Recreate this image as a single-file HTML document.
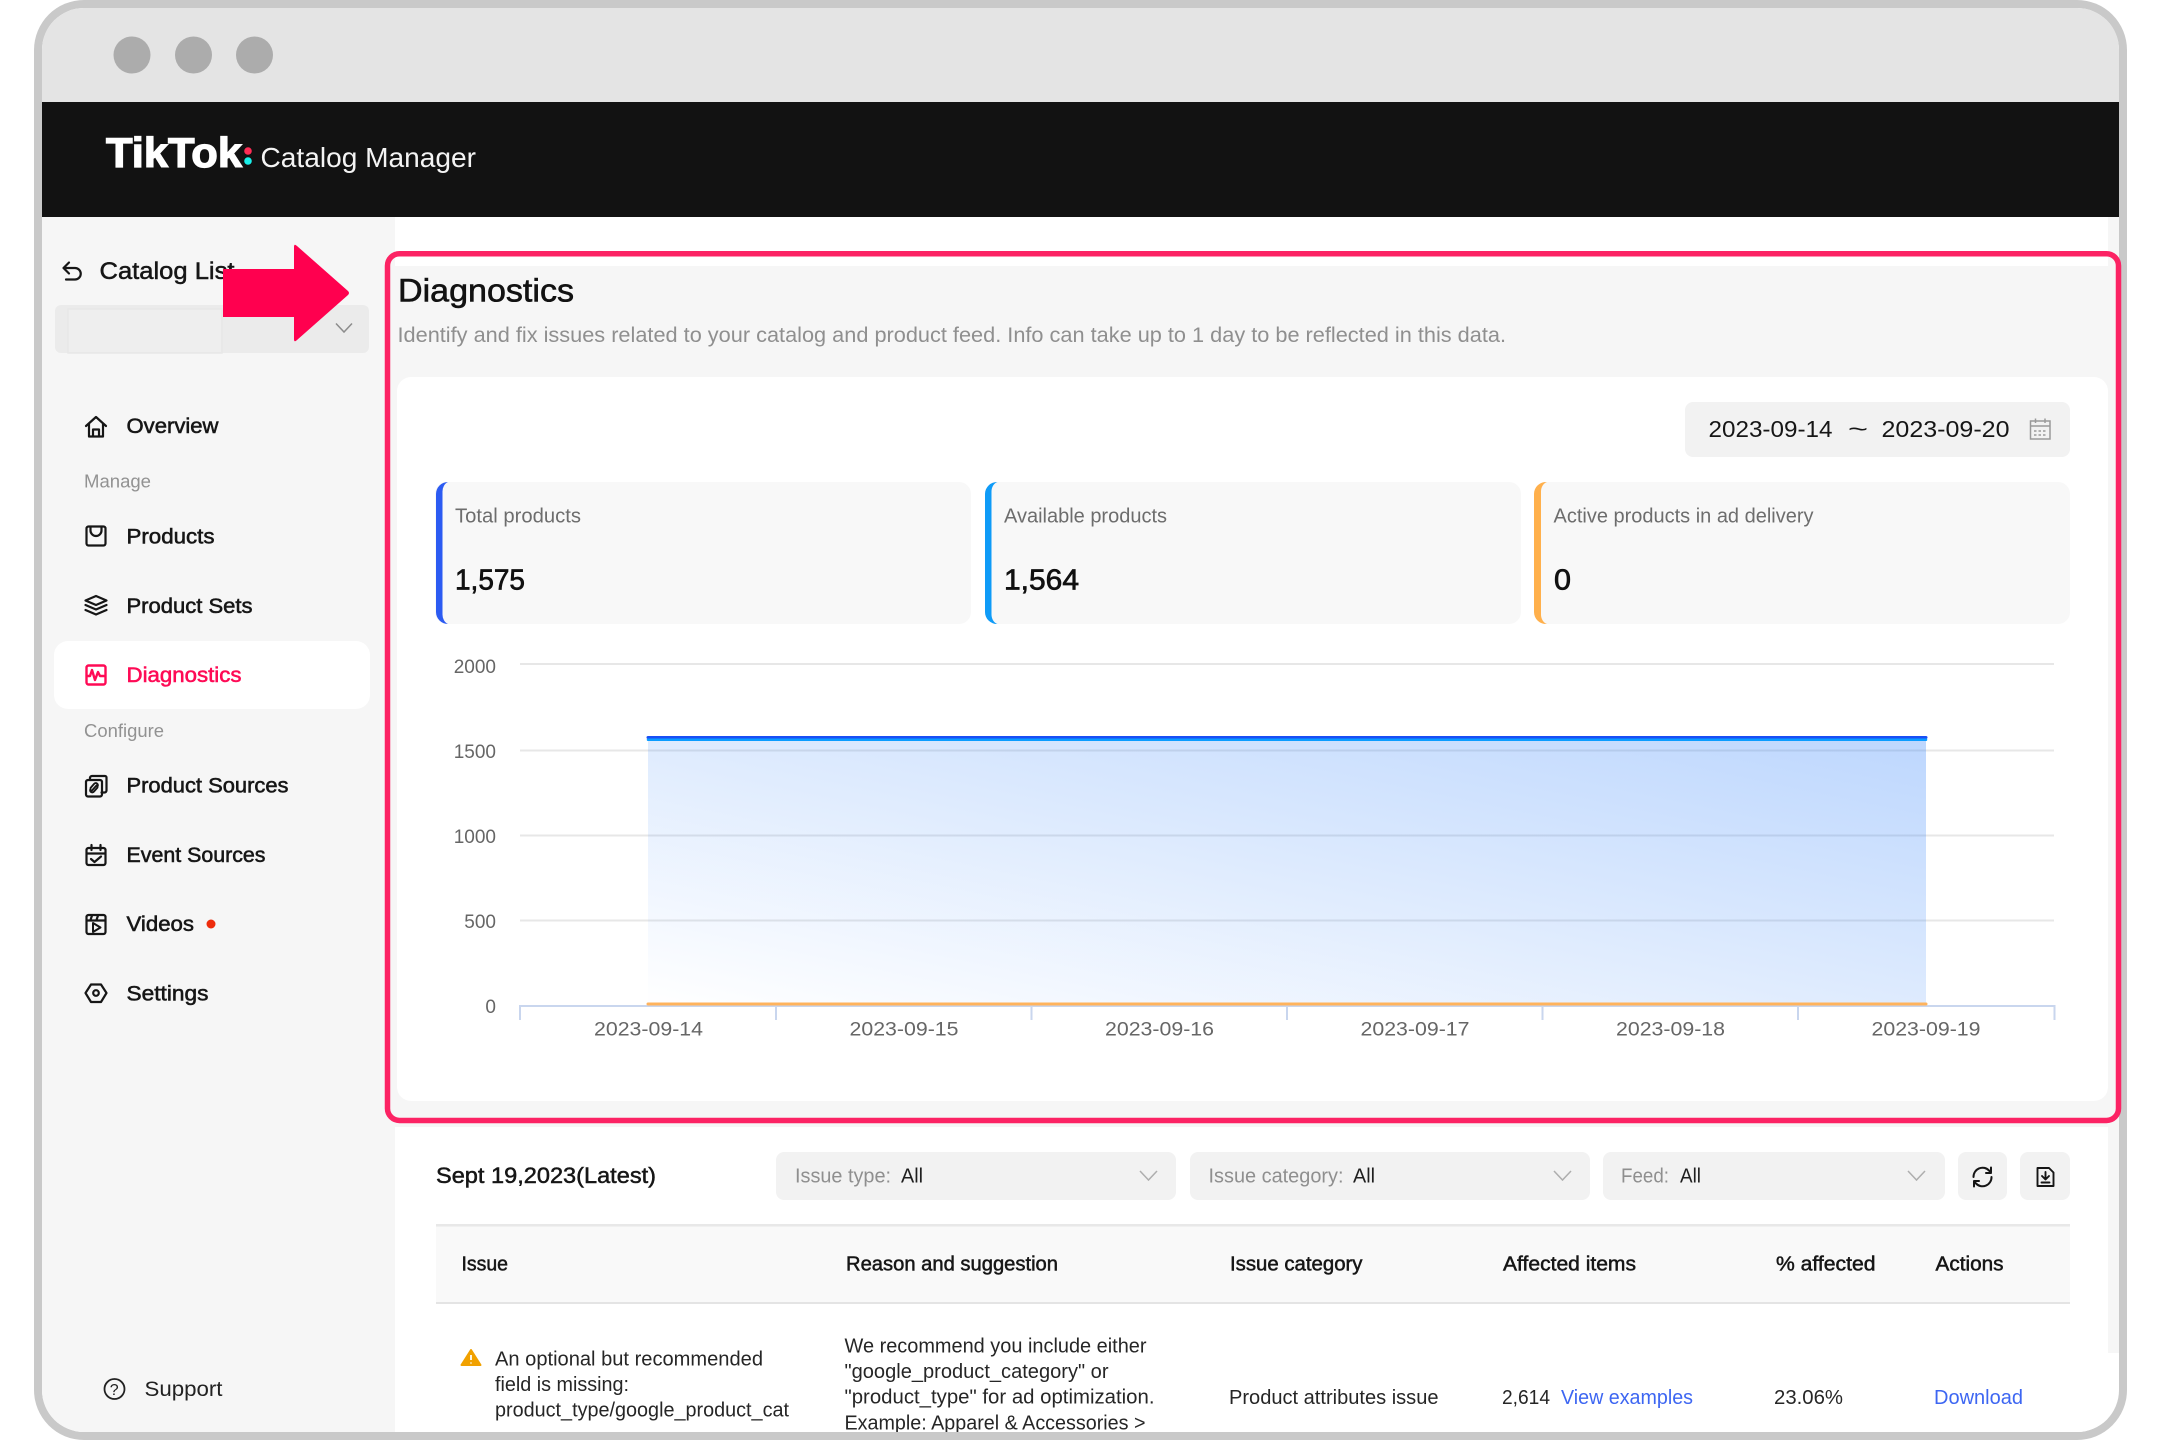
<!DOCTYPE html>
<html lang="en">
<head>
<meta charset="utf-8">
<title>TikTok Catalog Manager - Diagnostics</title>
<style>
html,body{margin:0;padding:0;background:#fff;width:2160px;height:1440px;overflow:hidden}
svg{display:block}
text{font-family:"Liberation Sans",Arial,sans-serif;fill:#161616;white-space:pre}
.m{stroke:#161616;stroke-width:.5px}
.nav{font-size:21px;stroke:#161616;stroke-width:.55px}
.lbl{font-size:20px;fill:#8f8f8f}
.val{font-size:20px;fill:#1f1f1f}
.body{font-size:20px;fill:#262626}
.th{font-size:20px;stroke:#161616;stroke-width:.5px}
.stat{font-size:20px;fill:#6d6d6d}
.num{font-size:29px;fill:#111;stroke:#111;stroke-width:.7px}
.ax{font-size:19px;fill:#666}
.lnk{font-size:20px;fill:#3d66f2}
.ic{fill:none;stroke:#161616;stroke-width:2.2;stroke-linecap:round;stroke-linejoin:round}
.ip{fill:none;stroke:#ff0a55;stroke-width:2.4;stroke-linecap:round;stroke-linejoin:round}
</style>
</head>
<body>
<svg width="2160" height="1440" viewBox="0 0 2160 1440" xmlns="http://www.w3.org/2000/svg">
<defs>
<clipPath id="inner"><rect x="42" y="8" width="2077" height="1424" rx="42" ry="42"/></clipPath>
<linearGradient id="area" gradientUnits="userSpaceOnUse" x1="648" y1="1006" x2="755" y2="493">
<stop offset="0" stop-color="#2a7dfb" stop-opacity="0"/>
<stop offset="1" stop-color="#2a7dfb" stop-opacity=".31"/>
</linearGradient>
</defs>

<!-- frame -->
<rect x="34" y="0" width="2093" height="1440" rx="50" ry="50" fill="#c9c9c9"/>
<g clip-path="url(#inner)">
<rect x="42" y="8" width="2077" height="1424" fill="#fff"/>
<!-- title bar -->
<rect x="42" y="8" width="2077" height="94" fill="#e4e4e4"/>
<circle cx="132" cy="55" r="18.5" fill="#acacac"/>
<circle cx="193.500" cy="55" r="18.5" fill="#acacac"/>
<circle cx="254.500" cy="55" r="18.5" fill="#acacac"/>
<!-- black header -->
<rect x="42" y="102" width="2077" height="115" fill="#121212"/>
<text x="106" y="167" font-size="42" font-weight="700" textLength="136" lengthAdjust="spacingAndGlyphs" style="fill:#fff;stroke:#fff;stroke-width:1.300px">TikTok</text>
<circle cx="248" cy="151" r="3.800" fill="#fe2c55"/>
<circle cx="248" cy="161" r="3.800" fill="#19f0ea"/>
<text x="260.500" y="167" font-size="28" textLength="215.500" lengthAdjust="spacingAndGlyphs" style="fill:#f4f4f4">Catalog Manager</text>

<!-- sidebar -->
<rect x="42" y="217" width="353" height="1215" fill="#f6f6f6"/>
<!-- main grey bg -->
<rect x="395" y="266" width="1724" height="861" fill="#f6f6f6"/>
<rect x="2108" y="217" width="11" height="1136" fill="#f6f6f6"/>
<!-- cards -->
<rect x="397" y="377" width="1711" height="724" rx="14" fill="#fff"/>
<rect x="397" y="1127" width="1711" height="330" rx="14" fill="#fff"/>

<!-- sidebar contents -->
<path class="ic" d="M69 262.500 L63.500 268 L69 273.500 M63.500 268 H75 a5.500 5.500 0 0 1 0 11.500 H66"/>
<text x="99.500" y="279" font-size="24.500" textLength="135" lengthAdjust="spacingAndGlyphs" class="m">Catalog List</text>
<rect x="55" y="305" width="314" height="48" rx="6" fill="#ebebeb"/>
<rect x="68" y="309" width="154" height="44" fill="#eeeeee" stroke="#e7e7e7" stroke-width="1.500"/>
<path d="M336 323.500 L344 332 L352 323.500" fill="none" stroke="#8c8c8c" stroke-width="1.500"/>

<path class="ic" d="M86 426 L96 417 L106 426 M89 424 V436.500 H103 V424 M93 436.500 V429.500 H99 V436.500"/>
<text x="126.500" y="433" textLength="92" lengthAdjust="spacingAndGlyphs" class="nav">Overview</text>
<text x="84" y="487.500" font-size="18.500" textLength="67" lengthAdjust="spacingAndGlyphs" style="fill:#929292">Manage</text>

<rect x="86.500" y="526.500" width="19" height="19" rx="2" class="ic"/>
<path class="ic" d="M90.500 527 v3.500 a5.500 5.500 0 0 0 11 0 v-3.500"/>
<text x="126.500" y="543.500" textLength="88" lengthAdjust="spacingAndGlyphs" class="nav">Products</text>

<path class="ic" d="M96 596 L106.500 600.500 L96 605 L85.500 600.500 Z M85.500 605 L96 609.500 L106.500 605 M85.500 610 L96 614.500 L106.500 610"/>
<text x="126.500" y="613" textLength="126" lengthAdjust="spacingAndGlyphs" class="nav">Product Sets</text>

<rect x="54" y="641" width="316" height="68" rx="14" fill="#fff"/>
<rect x="86.500" y="665.500" width="19" height="19" rx="2" class="ip"/>
<path class="ip" d="M87 676 h3 l2 -6 l3 10 l3 -8 l2 4 h5"/>
<text x="126.500" y="682" textLength="115" lengthAdjust="spacingAndGlyphs" font-size="21" style="fill:#fe0a55;stroke:#fe0a55;stroke-width:.55px">Diagnostics</text>
<text x="84" y="737" font-size="18.500" textLength="80" lengthAdjust="spacingAndGlyphs" style="fill:#929292">Configure</text>

<rect x="86" y="780" width="16" height="16.500" rx="2" class="ic"/>
<path class="ic" d="M90 780 v-2 a2 2 0 0 1 2 -2 h13 a1.500 1.500 0 0 1 1.500 1.500 v13 a2 2 0 0 1 -2 2 h-3"/>
<path class="ic" style="stroke-width:1.900" d="M91.500 791 L96.500 785.500 M90.500 788 l3.500 -4 a2 2 0 0 1 3.500 2.500 M97.500 787.500 l-3.500 4 a2 2 0 0 1 -3.500 -2.500"/>
<text x="126.500" y="792.500" textLength="162" lengthAdjust="spacingAndGlyphs" class="nav">Product Sources</text>

<rect x="86.500" y="848" width="19" height="17" rx="2" class="ic"/>
<path class="ic" d="M87 853.500 H105 M91.500 845 V850 M100.500 845 V850 M91 859 l3.500 3 l6.500 -5.500"/>
<text x="126.500" y="862" textLength="139" lengthAdjust="spacingAndGlyphs" class="nav">Event Sources</text>

<rect x="86.500" y="915" width="19" height="19" rx="2" class="ic"/>
<path class="ic" d="M87 920.500 H105 M92 915.500 l-1.500 4.500 M98 915.500 l-1.500 4.500"/>
<path d="M93 923 L100.500 927.500 L93 932 Z" fill="none" stroke="#161616" stroke-width="2" stroke-linejoin="round"/>
<text x="126.500" y="931" textLength="67.500" lengthAdjust="spacingAndGlyphs" class="nav">Videos</text>
<circle cx="211" cy="924" r="4.500" fill="#ee2c0c"/>

<path class="ic" d="M85.500 993 L91 984.500 H101 L106.500 993 L101 1002 H91 Z"/>
<circle cx="96" cy="993" r="2.800" class="ic"/>
<text x="126.500" y="1000.500" textLength="82" lengthAdjust="spacingAndGlyphs" class="nav">Settings</text>

<circle cx="114.500" cy="1389" r="10" fill="none" stroke="#222" stroke-width="1.800"/>
<text x="109.800" y="1395" font-size="16" style="fill:#222">?</text>
<text x="144.500" y="1396" font-size="21" textLength="78" lengthAdjust="spacingAndGlyphs" style="fill:#222">Support</text>

<!-- heading -->
<text x="398" y="301.500" font-size="32" textLength="176" lengthAdjust="spacingAndGlyphs" style="fill:#121212;stroke:#121212;stroke-width:.6px">Diagnostics</text>
<text x="397.500" y="342" font-size="21" textLength="1108.500" lengthAdjust="spacingAndGlyphs" style="fill:#8f8f8f">Identify and fix issues related to your catalog and product feed. Info can take up to 1 day to be reflected in this data.</text>

<!-- date picker -->
<rect x="1685" y="402" width="385" height="55" rx="8" fill="#f2f2f2"/>
<text x="1708.500" y="437" font-size="23" textLength="124" lengthAdjust="spacingAndGlyphs">2023-09-14</text>
<text x="1848" y="437" font-size="23" textLength="20" lengthAdjust="spacingAndGlyphs">~</text>
<text x="1881.500" y="437" font-size="23" textLength="128" lengthAdjust="spacingAndGlyphs">2023-09-20</text>
<g fill="none" stroke="#9a9a9a" stroke-width="1.500">
<rect x="2030.500" y="421" width="19.500" height="18"/>
<path d="M2031 426 H2050 M2035.500 418.500 V423 M2045 418.500 V423"/>
<path stroke-dasharray="2.500 2" d="M2034 431 H2047 M2034 435 H2047"/>
</g>

<!-- stat cards -->
<g>
<rect x="435" y="482" width="536" height="142" rx="12" fill="#f8f8f8"/>
<rect x="985" y="482" width="536" height="142" rx="12" fill="#f8f8f8"/>
<rect x="1535" y="482" width="535" height="142" rx="12" fill="#f8f8f8"/>
<path d="M448 482 A12 12 0 0 0 436 494 V612 A12 12 0 0 0 448 624 A8 10 0 0 1 442.500 614 V492 A8 10 0 0 1 448 482 Z" fill="#2c5bf2"/>
<path d="M997.500 482 A12 12 0 0 0 985 494 V612 A12 12 0 0 0 997.500 624 A8 10 0 0 1 991.500 614 V492 A8 10 0 0 1 997.500 482 Z" fill="#0f9bf7"/>
<path d="M1547 482 A12 12 0 0 0 1534 494 V612 A12 12 0 0 0 1547 624 A8 10 0 0 1 1541 614 V492 A8 10 0 0 1 1547 482 Z" fill="#ffb04c"/>
<text x="455" y="522.500" textLength="126" lengthAdjust="spacingAndGlyphs" class="stat">Total products</text>
<text x="1004" y="522.500" textLength="163" lengthAdjust="spacingAndGlyphs" class="stat">Available products</text>
<text x="1553.500" y="522.500" textLength="260" lengthAdjust="spacingAndGlyphs" class="stat">Active products in ad delivery</text>
<text x="455" y="589.500" textLength="70" lengthAdjust="spacingAndGlyphs" class="num">1,575</text>
<text x="1004" y="589.500" textLength="75" lengthAdjust="spacingAndGlyphs" class="num">1,564</text>
<text x="1554" y="589.500" textLength="17" lengthAdjust="spacingAndGlyphs" class="num">0</text>
</g>

<!-- chart -->
<g stroke="#e7e7e7" stroke-width="2">
<path d="M520 664 H2054 M520 750.500 H2054 M520 835.500 H2054 M520 920.500 H2054"/>
</g>
<rect x="648" y="738" width="1278" height="268" fill="url(#area)"/>
<g stroke="#c9d6ee" stroke-width="2" fill="none">
<path d="M520 1020 V1006 H2054.500 V1020 M776 1006 V1020 M1031.500 1006 V1020 M1287 1006 V1020 M1542.500 1006 V1020 M1798 1006 V1020"/>
</g>
<path d="M648 737.500 H1926" stroke="#1a4ff5" stroke-width="3" stroke-linecap="round"/>
<path d="M648 739.800 H1926" stroke="#0a9cff" stroke-width="2.500" stroke-linecap="round"/>
<path d="M648 1004 H1926" stroke="#ffb35c" stroke-width="3" stroke-linecap="round"/>
<text x="496" y="673" text-anchor="end" class="ax">2000</text>
<text x="496" y="758" text-anchor="end" class="ax">1500</text>
<text x="496" y="843" text-anchor="end" class="ax">1000</text>
<text x="496" y="928" text-anchor="end" class="ax">500</text>
<text x="496" y="1013" text-anchor="end" class="ax">0</text>
<text x="594" y="1035.500" textLength="109" lengthAdjust="spacingAndGlyphs" class="ax">2023-09-14</text>
<text x="849.500" y="1035.500" textLength="109" lengthAdjust="spacingAndGlyphs" class="ax">2023-09-15</text>
<text x="1105" y="1035.500" textLength="109" lengthAdjust="spacingAndGlyphs" class="ax">2023-09-16</text>
<text x="1360.500" y="1035.500" textLength="109" lengthAdjust="spacingAndGlyphs" class="ax">2023-09-17</text>
<text x="1616" y="1035.500" textLength="109" lengthAdjust="spacingAndGlyphs" class="ax">2023-09-18</text>
<text x="1871.500" y="1035.500" textLength="109" lengthAdjust="spacingAndGlyphs" class="ax">2023-09-19</text>

<!-- filters -->
<text x="436" y="1183" font-size="22" textLength="220" lengthAdjust="spacingAndGlyphs" class="m">Sept 19,2023(Latest)</text>
<rect x="776" y="1152" width="400" height="48" rx="8" fill="#f2f2f2"/>
<rect x="1190" y="1152" width="400" height="48" rx="8" fill="#f2f2f2"/>
<rect x="1603" y="1152" width="342" height="48" rx="8" fill="#f2f2f2"/>
<rect x="1958" y="1152" width="49" height="48" rx="8" fill="#f2f2f2"/>
<rect x="2020" y="1152" width="50" height="48" rx="8" fill="#f2f2f2"/>
<text x="795" y="1182.500" textLength="96" lengthAdjust="spacingAndGlyphs" class="lbl">Issue type:</text>
<text x="901" y="1182.500" textLength="22" lengthAdjust="spacingAndGlyphs" class="val">All</text>
<text x="1208.500" y="1182.500" textLength="135" lengthAdjust="spacingAndGlyphs" class="lbl">Issue category:</text>
<text x="1353" y="1182.500" textLength="22" lengthAdjust="spacingAndGlyphs" class="val">All</text>
<text x="1621" y="1182.500" textLength="48" lengthAdjust="spacingAndGlyphs" class="lbl">Feed:</text>
<text x="1680" y="1182.500" textLength="21" lengthAdjust="spacingAndGlyphs" class="val">All</text>
<g fill="none" stroke="#aeaeae" stroke-width="1.500">
<path d="M1140 1171 L1148.500 1180 L1157 1171"/>
<path d="M1554 1171 L1562.500 1180 L1571 1171"/>
<path d="M1908 1171 L1916.500 1180 L1925 1171"/>
</g>
<path class="ic" style="stroke-width:2" d="M1973.500 1177 a9 9 0 0 1 15.500 -6.500 l2 2 M1991.500 1177 a9 9 0 0 1 -15.500 6.500 l-2 -2 M1991 1167.500 v5.500 h-5 M1974 1186.500 v-5.500 h5"/>
<path class="ic" style="stroke-width:1.900" d="M2037.500 1168 H2049 L2053.500 1172.500 V1186 H2037.500 Z M2045.500 1172 V1179 M2042 1176 L2045.500 1179.500 L2049 1176 M2041.500 1182.500 H2049.500"/>

<!-- table -->
<rect x="436" y="1224" width="1634" height="79" fill="#f9f9f9"/>
<rect x="436" y="1224" width="1634" height="2.500" fill="#e8e8e8"/>
<rect x="436" y="1302" width="1634" height="2" fill="#e4e4e4"/>
<text x="461.500" y="1270.500" textLength="46.500" lengthAdjust="spacingAndGlyphs" class="th">Issue</text>
<text x="846" y="1270.500" textLength="212" lengthAdjust="spacingAndGlyphs" class="th">Reason and suggestion</text>
<text x="1230" y="1270.500" textLength="132.500" lengthAdjust="spacingAndGlyphs" class="th">Issue category</text>
<text x="1503" y="1270.500" textLength="133" lengthAdjust="spacingAndGlyphs" class="th">Affected items</text>
<text x="1776" y="1270.500" textLength="99.500" lengthAdjust="spacingAndGlyphs" class="th">% affected</text>
<text x="1935.500" y="1270.500" textLength="68" lengthAdjust="spacingAndGlyphs" class="th">Actions</text>

<path d="M471 1350 L480.500 1365 H461.500 Z" fill="#f1a100" stroke="#f1a100" stroke-width="2" stroke-linejoin="round"/>
<path d="M471 1355 V1360 M471 1362.500 V1363.500" stroke="#fff" stroke-width="1.800"/>
<text x="495" y="1365.500" textLength="268" lengthAdjust="spacingAndGlyphs" class="body">An optional but recommended</text>
<text x="495" y="1391" textLength="134" lengthAdjust="spacingAndGlyphs" class="body">field is missing:</text>
<text x="495" y="1416.500" textLength="294" lengthAdjust="spacingAndGlyphs" class="body">product_type/google_product_cat</text>

<text x="844.500" y="1352.500" textLength="302" lengthAdjust="spacingAndGlyphs" class="body">We recommend you include either</text>
<text x="844.500" y="1378" textLength="264" lengthAdjust="spacingAndGlyphs" class="body">"google_product_category" or</text>
<text x="844.500" y="1403.500" textLength="310" lengthAdjust="spacingAndGlyphs" class="body">"product_type" for ad optimization.</text>
<text x="844.500" y="1429.500" textLength="301" lengthAdjust="spacingAndGlyphs" class="body">Example: Apparel &amp; Accessories &gt;</text>

<text x="1229" y="1404" textLength="209.500" lengthAdjust="spacingAndGlyphs" class="body">Product attributes issue</text>
<text x="1502" y="1404" textLength="48" lengthAdjust="spacingAndGlyphs" class="body">2,614</text>
<text x="1561" y="1404" textLength="132" lengthAdjust="spacingAndGlyphs" class="lnk">View examples</text>
<text x="1774" y="1404" textLength="69" lengthAdjust="spacingAndGlyphs" class="body">23.06%</text>
<text x="1934" y="1404" textLength="89" lengthAdjust="spacingAndGlyphs" class="lnk">Download</text>
</g>

<!-- pink highlight box -->
<rect x="387.500" y="253.700" width="1731" height="866.800" rx="12" ry="12" fill="none" stroke="#fc2364" stroke-width="5.500"/>
<!-- arrow -->
<path d="M223 269 H294 V247 Q294 243 297 246 L348 291 Q350 293 348 295 L297 340 Q294 343 294 339 V317 H223 Z" fill="#ff004f"/>
</svg>
</body>
</html>
